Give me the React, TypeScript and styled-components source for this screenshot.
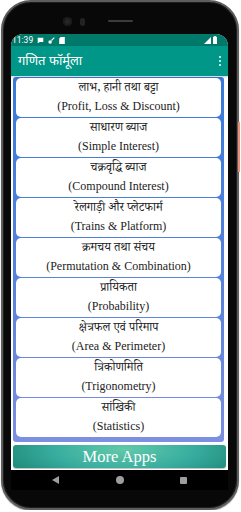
import React from 'react';
import styled, { createGlobalStyle } from 'styled-components';

const GlobalStyle = createGlobalStyle`
  html, body {
    margin: 0;
    padding: 0;
    background: #ffffff;
  }
  * {
    box-sizing: border-box;
  }
`;

const LATIN_SERIF = `"Liberation Serif", "Times New Roman", serif`;
const DEVANAGARI = `"Noto Serif Devanagari", "Noto Sans Devanagari", "Lohit Devanagari", "Liberation Serif", serif`;

const Phone = styled.div`
  position: relative;
  width: 238px;
  height: 510px;
  margin-left: 1px;
  padding: 32px 9px 18px 8px;
  border: 2px solid #5d5d5d;
  border-radius: 30px;
  background: #080808;
  box-shadow: inset 0 0 0 1px #1e1e1e, 0 1px 1px #9a9a9a;
  display: flex;
  flex-direction: column;
`;

const SideButton = styled.div`
  position: absolute;
  right: -3px;
  top: 120px;
  width: 2px;
  height: 50px;
  background: #e8907a;
`;

const TopBezel = styled.div`
  position: absolute;
  top: 15px;
  left: 0;
  right: 0;
  display: flex;
  align-items: center;
  justify-content: center;
`;

const Camera = styled.div`
  position: absolute;
  left: 60px;
  top: 0;
  width: 9px;
  height: 9px;
  border-radius: 50%;
  background: #262626;
  box-shadow: inset 0 0 0 2px #1a1a1a;
`;

const Sensor = styled.div`
  position: absolute;
  left: 77px;
  top: 1px;
  width: 5px;
  height: 8px;
  border-radius: 3px;
  background: #222;
`;

const Speaker = styled.div`
  width: 25px;
  height: 2px;
  margin-top: 3px;
  border-radius: 1px;
  background: #3c3c3c;
`;

const Screen = styled.div`
  flex: 1;
  display: flex;
  flex-direction: column;
  border-radius: 12px 12px 0 0;
  overflow: hidden;
  background: #ffffff;
`;

const StatusBar = styled.div`
  height: 12px;
  background: #00796b;
  display: flex;
  align-items: center;
  padding: 0 11px 0 1px;
  font-family: "Roboto", "Liberation Sans", sans-serif;
  font-size: 8.5px;
  color: #ffffff;
`;

const StatusLeft = styled.div`
  display: flex;
  align-items: center;
  gap: 4px;
  flex: 1;
`;

const StatusRight = styled.div`
  display: flex;
  align-items: center;
  gap: 2px;
`;

const AppBar = styled.div`
  height: 30px;
  background: #009688;
  display: flex;
  align-items: center;
  justify-content: space-between;
  padding: 0 7px 0 7px;
  box-shadow: 0 1px 2px rgba(0, 0, 0, 0.2);
  position: relative;
`;

const Title = styled.div`
  font-family: "Noto Sans Devanagari", "Noto Sans", "Liberation Sans", sans-serif;
  font-size: 13px;
  color: #ffffff;
`;

const MenuDots = styled.div`
  display: flex;
  flex-direction: column;
  gap: 1.5px;
  span {
    width: 2.5px;
    height: 2.5px;
    border-radius: 50%;
    background: #ffffff;
  }
`;

const Content = styled.div`
  flex: 1;
  display: flex;
  flex-direction: column;
  padding: 1px 2px 2px 2px;
  gap: 3px;
`;

const List = styled.div`
  display: flex;
  flex-direction: column;
  gap: 1px;
  padding: 1px 3px 5px 3px;
  margin-right: 2px;
  border-radius: 3px;
  background: linear-gradient(180deg, #3a79d8 0%, #5a84da 60%, #7d8fe0 100%);
`;

const Item = styled.div`
  height: 39px;
  border-radius: 5px;
  background: #ffffff;
  display: flex;
  flex-direction: column;
  align-items: center;
  justify-content: center;
  color: #222222;
`;

const HindiLine = styled.div`
  font-family: ${DEVANAGARI};
  font-size: 12px;
  line-height: 16px;
`;

const EnglishLine = styled.div`
  font-family: ${LATIN_SERIF};
  font-size: 12px;
  line-height: 16px;
`;

const MoreApps = styled.button`
  height: 23px;
  border: none;
  border-radius: 3px;
  background: radial-gradient(ellipse 60% 160% at 52% 20%, #62c9a9 0%, #38ad9f 55%, #1f8a79 100%);
  box-shadow: 0 1px 1px rgba(0, 0, 0, 0.25);
  color: #ffffff;
  font-family: ${LATIN_SERIF};
  font-size: 16.5px;
  padding: 0;
`;

const NavBar = styled.div`
  height: 20px;
  background: #000000;
  display: flex;
  align-items: center;
  justify-content: space-between;
  padding: 0 41px 0 41px;
`;

const NavBack = styled.div`
  width: 0;
  height: 0;
  border-top: 4px solid transparent;
  border-bottom: 4px solid transparent;
  border-right: 7px solid #9e9e9e;
`;

const NavHome = styled.div`
  width: 8px;
  height: 8px;
  border-radius: 50%;
  background: #9e9e9e;
`;

const NavRecent = styled.div`
  width: 7px;
  height: 7px;
  border-radius: 1px;
  background: #9e9e9e;
`;

const topics = [
  ['लाभ, हानी तथा बट्टा', '(Profit, Loss & Discount)'],
  ['साधारण ब्याज', '(Simple Interest)'],
  ['चक्रवृद्धि ब्याज', '(Compound Interest)'],
  ['रेलगाड़ी और प्लेटफार्म', '(Trains & Platform)'],
  ['क्रमचय तथा संचय', '(Permutation & Combination)'],
  ['प्रायिकता', '(Probability)'],
  ['क्षेत्रफल एवं परिमाप', '(Area & Perimeter)'],
  ['त्रिकोणमिति', '(Trigonometry)'],
  ['सांखिकी', '(Statistics)'],
];

const App: React.FC = () => {
  return (
    <>
      <GlobalStyle />
      <Phone>
        <SideButton />
        <TopBezel>
          <Camera />
          <Sensor />
          <Speaker />
        </TopBezel>
        <Screen>
          <StatusBar>
            <StatusLeft>
              <span>11:39</span>
              <svg width="7" height="7" viewBox="0 0 10 10">
                <path d="M1 1h8v6H4l-3 2z" fill="#fff" />
              </svg>
              <svg width="7" height="7" viewBox="0 0 10 10">
                <circle cx="3" cy="7" r="2.5" fill="#fff" />
                <path d="M5 5l4-4" stroke="#fff" strokeWidth="1.6" />
              </svg>
              <svg width="6" height="7" viewBox="0 0 8 10">
                <path d="M2 0h6v10H0V2z" fill="#fff" />
              </svg>
            </StatusLeft>
            <StatusRight>
              <svg width="7" height="7" viewBox="0 0 10 10">
                <path d="M10 0v10H0z" fill="#fff" />
              </svg>
              <svg width="4" height="8" viewBox="0 0 5 10">
                <path d="M1.5 0h2v1H5v9H0V1h1.5z" fill="#fff" />
              </svg>
            </StatusRight>
          </StatusBar>
          <AppBar>
            <Title>गणित फॉर्मूला</Title>
            <MenuDots>
              <span />
              <span />
              <span />
            </MenuDots>
          </AppBar>
          <Content>
            <List>
              {topics.map(([hindi, english]) => (
                <Item key={english}>
                  <HindiLine>{hindi}</HindiLine>
                  <EnglishLine>{english}</EnglishLine>
                </Item>
              ))}
            </List>
            <MoreApps>More Apps</MoreApps>
          </Content>
          <NavBar>
            <NavBack />
            <NavHome />
            <NavRecent />
          </NavBar>
        </Screen>
      </Phone>
    </>
  );
};

export default App;
